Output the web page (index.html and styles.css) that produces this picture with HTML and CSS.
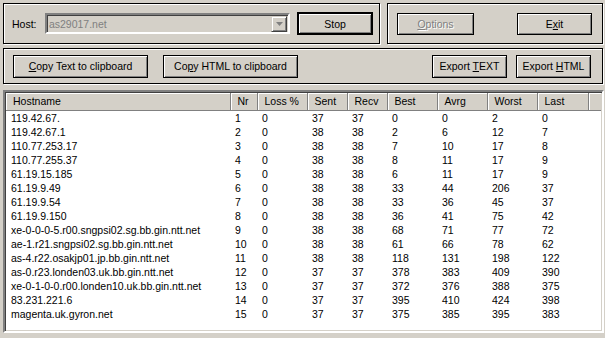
FILE: index.html
```html
<!DOCTYPE html>
<html lang="en">
<head>
    <meta charset="UTF-8">
    <title>WinMTR</title>
    <link rel="stylesheet" href="styles.css">
</head>
<body>
    <div class="toolbar">
        <div class="group host-group">
            <label class="host-label">Host:</label>
            <div class="combo">
                <span class="combo-text">as29017.net</span>
                <span class="combo-btn">
                    <svg width="7" height="4" viewBox="0 0 7 4"><path d="M0 0h7L3.5 4z" fill="#808080"/></svg>
                </span>
            </div>
            <button class="btn btn-default btn-stop">Stop</button>
        </div>
        <div class="group opt-group">
            <button class="btn btn-opt" disabled><u>O</u>ptions</button>
            <button class="btn btn-exit">E<u>x</u>it</button>
        </div>
    </div>

    <div class="group export-group">
        <button class="btn btn-copy"><u>C</u>opy Text to clipboard</button>
        <button class="btn btn-copy">Co<u>p</u>y HTML to clipboard</button>
        <span class="spacer"></span>
        <button class="btn btn-export">Export <u>T</u>EXT</button>
        <button class="btn btn-export">Export <u>H</u>TML</button>
    </div>

    <div class="list">
        <table class="hops">
            <colgroup>
                <col style="width:224px">
                <col style="width:27px">
                <col style="width:50px">
                <col style="width:40px">
                <col style="width:40px">
                <col style="width:50px">
                <col style="width:50px">
                <col style="width:50px">
                <col style="width:51px">
                <col>
            </colgroup>
            <thead>
                <tr>
                    <th>Hostname</th><th>Nr</th><th>Loss %</th><th>Sent</th><th>Recv</th>
                    <th>Best</th><th>Avrg</th><th>Worst</th><th>Last</th><th class="filler"></th>
                </tr>
            </thead>
            <tbody>
                <tr><td>119.42.67.</td><td>1</td><td>0</td><td>37</td><td>37</td><td>0</td><td>0</td><td>2</td><td>0</td><td></td></tr>
                <tr><td>119.42.67.1</td><td>2</td><td>0</td><td>38</td><td>38</td><td>2</td><td>6</td><td>12</td><td>7</td><td></td></tr>
                <tr><td>110.77.253.17</td><td>3</td><td>0</td><td>38</td><td>38</td><td>7</td><td>10</td><td>17</td><td>8</td><td></td></tr>
                <tr><td>110.77.255.37</td><td>4</td><td>0</td><td>38</td><td>38</td><td>8</td><td>11</td><td>17</td><td>9</td><td></td></tr>
                <tr><td>61.19.15.185</td><td>5</td><td>0</td><td>38</td><td>38</td><td>6</td><td>11</td><td>17</td><td>9</td><td></td></tr>
                <tr><td>61.19.9.49</td><td>6</td><td>0</td><td>38</td><td>38</td><td>33</td><td>44</td><td>206</td><td>37</td><td></td></tr>
                <tr><td>61.19.9.54</td><td>7</td><td>0</td><td>38</td><td>38</td><td>33</td><td>36</td><td>45</td><td>37</td><td></td></tr>
                <tr><td>61.19.9.150</td><td>8</td><td>0</td><td>38</td><td>38</td><td>36</td><td>41</td><td>75</td><td>42</td><td></td></tr>
                <tr><td>xe-0-0-0-5.r00.sngpsi02.sg.bb.gin.ntt.net</td><td>9</td><td>0</td><td>38</td><td>38</td><td>68</td><td>71</td><td>77</td><td>72</td><td></td></tr>
                <tr><td>ae-1.r21.sngpsi02.sg.bb.gin.ntt.net</td><td>10</td><td>0</td><td>38</td><td>38</td><td>61</td><td>66</td><td>78</td><td>62</td><td></td></tr>
                <tr><td>as-4.r22.osakjp01.jp.bb.gin.ntt.net</td><td>11</td><td>0</td><td>38</td><td>38</td><td>118</td><td>131</td><td>198</td><td>122</td><td></td></tr>
                <tr><td>as-0.r23.londen03.uk.bb.gin.ntt.net</td><td>12</td><td>0</td><td>37</td><td>37</td><td>378</td><td>383</td><td>409</td><td>390</td><td></td></tr>
                <tr><td>xe-0-1-0-0.r00.londen10.uk.bb.gin.ntt.net</td><td>13</td><td>0</td><td>37</td><td>37</td><td>372</td><td>376</td><td>388</td><td>375</td><td></td></tr>
                <tr><td>83.231.221.6</td><td>14</td><td>0</td><td>37</td><td>37</td><td>395</td><td>410</td><td>424</td><td>398</td><td></td></tr>
                <tr><td>magenta.uk.gyron.net</td><td>15</td><td>0</td><td>37</td><td>37</td><td>375</td><td>385</td><td>395</td><td>383</td><td></td></tr>
            </tbody>
        </table>
    </div>
</body>
</html>
```

FILE: styles.css
```css
* {
    margin: 0;
    padding: 0;
    box-sizing: border-box;
}
body {
    font-family: "Liberation Sans", Arial, sans-serif;
    font-size: 10.5px;
    color: #000;
    background: #d4d0c8;
    width: 605px;
    height: 338px;
    overflow: hidden;
    padding: 3px 0 0 3px;
}
u {
    text-decoration: underline;
    text-underline-offset: 1px;
}
.toolbar {
    display: flex;
    gap: 7px;
}
/* group frames */
.group {
    display: flex;
    align-items: center;
    border: 1px solid #000;
    box-shadow: inset 1px 1px 0 #fff, 1px 1px 0 #fff;
}
.host-group {
    width: 377px;
    height: 41px;
    padding: 0 6px 0 8px;
}
.host-label {
    width: 33px;
}
.combo {
    width: 246px;
    height: 21px;
    display: flex;
    align-items: center;
    justify-content: space-between;
    border: 2px solid;
    border-color: #808080 #fff #fff #808080;
    box-shadow: inset 1px 1px 0 #404040, inset -1px -1px 0 #d4d0c8;
    padding: 0 1px 0 2px;
}
.combo-text {
    color: #808080;
}
.combo-btn {
    width: 16px;
    height: 16px;
    display: flex;
    align-items: center;
    justify-content: center;
    border: 1px solid;
    border-color: #d4d0c8 #404040 #404040 #d4d0c8;
    box-shadow: inset 1px 1px 0 #fff, inset -1px -1px 0 #808080;
}
.opt-group {
    width: 216px;
    height: 41px;
    justify-content: space-between;
    padding: 0 10px 0 9px;
}
.export-group {
    width: 600px;
    height: 36px;
    margin-top: 4px;
    padding: 0 11px 0 9px;
    gap: 15px;
}
.export-group .btn-export + .btn-export {
    margin-left: -6px;
}
.spacer {
    flex: 1;
}
/* push buttons */
.btn {
    font: inherit;
    height: 23px;
    background: #d4d0c8;
    color: #000;
    border: 1px solid #000;
    box-shadow: inset 1px 1px 0 #fff, inset -1px -1px 0 #808080;
}
.btn-default {
    border-width: 2px;
}
.btn-stop {
    width: 76px;
    margin-left: 7px;
}
.btn-opt {
    width: 77px;
    height: 22px;
    color: #808080;
    text-shadow: 1px 1px 0 #fff;
}
.btn-exit {
    width: 75px;
    height: 22px;
}
.btn-copy {
    width: 135px;
}
.btn-export {
    width: 75px;
}
/* list view */
.list {
    width: 601px;
    height: 243px;
    margin-top: 6px;
    background: #fff;
    border: 2px solid;
    border-color: #808080 #fff #fff #808080;
    box-shadow: inset 1px 1px 0 #404040, inset -1px -1px 0 #d4d0c8;
    padding: 1px 1px 0 1px;
    overflow: hidden;
}
.hops {
    width: 100%;
    table-layout: fixed;
    border-collapse: collapse;
}
.hops th {
    height: 17px;
    background: #d4d0c8;
    font-weight: normal;
    text-align: left;
    padding: 0 0 0 7px;
    border-right: 1px solid #808080;
    border-bottom: 1px solid #808080;
    box-shadow: inset 1px 1px 0 #fff;
    white-space: nowrap;
}
.hops th.filler {
    border-right: none;
}
.hops td {
    height: 14px;
    line-height: 14px;
    padding: 0 0 0 5px;
    white-space: nowrap;
    overflow: hidden;
}
```
